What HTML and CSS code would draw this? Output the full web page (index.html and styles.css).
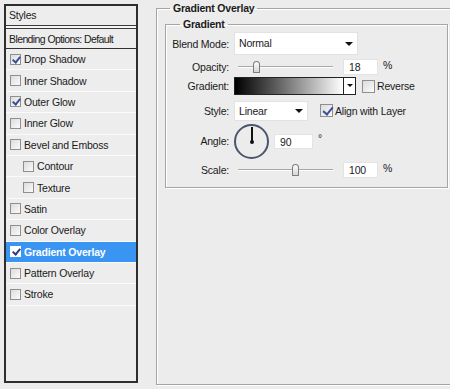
FILE: index.html
```html
<!DOCTYPE html>
<html>
<head>
<meta charset="utf-8">
<link rel="stylesheet" href="styles.css">
</head>
<body>
<div class="wrap">
  <div class="styles">
    <div class="head">Styles</div>
    <div class="blend">Blending Options: Default</div>
    <div class="list">
      <div class="item"><span class="cb on"></span>Drop Shadow</div>
      <div class="item"><span class="cb"></span>Inner Shadow</div>
      <div class="item"><span class="cb on"></span>Outer Glow</div>
      <div class="item"><span class="cb"></span>Inner Glow</div>
      <div class="item"><span class="cb"></span>Bevel and Emboss</div>
      <div class="item sub"><span class="cb"></span>Contour</div>
      <div class="item sub"><span class="cb"></span>Texture</div>
      <div class="item"><span class="cb"></span>Satin</div>
      <div class="item"><span class="cb"></span>Color Overlay</div>
      <div class="item sel"><span class="cb on"></span>Gradient Overlay</div>
      <div class="item"><span class="cb"></span>Pattern Overlay</div>
      <div class="item"><span class="cb"></span>Stroke</div>
    </div>
  </div>
  <fieldset class="outer">
    <legend>Gradient Overlay</legend>
    <fieldset class="inner">
      <legend>Gradient</legend>
      <div class="row r1">
        <div class="lbl">Blend Mode:</div>
        <div class="select wide">Normal<span class="arrow"></span></div>
      </div>
      <div class="row r2">
        <div class="lbl">Opacity:</div>
        <div class="slider"><span class="thumb t-op"></span></div>
        <div class="num">18</div>
        <div class="unit">%</div>
      </div>
      <div class="row r3">
        <div class="lbl">Gradient:</div>
        <div class="grad"><span class="swatch"></span><span class="gbtn"><span class="arrow"></span></span></div>
        <span class="cb big"></span><span class="cbl">Reverse</span>
      </div>
      <div class="row r4">
        <div class="lbl">Style:</div>
        <div class="select narrow">Linear<span class="arrow"></span></div>
        <span class="cb big on"></span><span class="cbl">Align with Layer</span>
      </div>
      <div class="row r5">
        <div class="lbl">Angle:</div>
        <div class="dial"><span class="hand"></span><span class="dot"></span></div>
        <div class="num angle">90</div>
        <div class="deg">°</div>
      </div>
      <div class="row r6">
        <div class="lbl">Scale:</div>
        <div class="slider"><span class="thumb t-sc"></span></div>
        <div class="num">100</div>
        <div class="unit">%</div>
      </div>
    </fieldset>
  </fieldset>
</div>
</body>
</html>
```
FILE: styles.css
```css
* { box-sizing: border-box; }
html, body { margin: 0; padding: 0; }
body {
  background: #ececec;
  font-family: "Liberation Sans", Arial, sans-serif;
  font-size: 10.5px;
  letter-spacing: -0.2px;
  color: #1a1a1a;
  width: 450px;
  height: 389px;
  overflow: hidden;
}
.wrap {
  display: flex;
  align-items: flex-start;
  padding: 4px 0 0 4px;
}
.styles {
  width: 134px;
  height: 379px;
  border: 2px solid #2e2e2e;
  background: #ededed;
  flex: none;
}
.head {
  height: 20px;
  line-height: 19px;
  padding-left: 3px;
  border-bottom: 1px solid #3a3a3a;
}
.blend {
  height: 23px;
  border-top: 2px solid #f6f6f6;
  box-shadow: inset 0 1px 0 #3a3a3a;
  line-height: 19px;
  padding-top: 2px;
  padding-left: 3px;
  letter-spacing: -0.6px;
  border-bottom: 1px solid #333;
}
.item {
  height: 21.4px;
  display: flex;
  align-items: center;
  padding-left: 4px;
  border-bottom: 1px solid #fafafa;
}
.item.sub { padding-left: 17px; }
.item .cb { margin-right: 3px; }
.item.sel {
  background: #3a95f2;
  color: #fff;
  font-weight: bold;
}
.cb {
  display: inline-block;
  width: 11px;
  height: 11px;
  border: 1px solid #8f8f8f;
  background: linear-gradient(135deg, #dcdcdc, #fbfbfb);
  position: relative;
  flex: none;
}
.cb.on::after {
  content: "";
  position: absolute;
  left: 3px;
  top: 0px;
  width: 3px;
  height: 6px;
  border-right: 2px solid #3b4f9a;
  border-bottom: 2px solid #3b4f9a;
  transform: rotate(40deg);
}
.sel .cb { background: #fff; border-color: #fff; }
.sel .cb.on::after { border-color: #2c3a80; }
.cb.big { width: 13px; height: 13px; }
.cb.big.on::after { left: 4px; top: 0px; width: 4px; height: 8px; }

fieldset {
  margin: 0;
  border: 1px solid #a5a5a5;
  box-shadow: 1px 1px 0 #fff, inset 1px 1px 0 #fff;
}
legend {
  font-weight: bold;
  padding: 0 3px;
  line-height: 13px;
}
.outer {
  flex: none;
  margin-left: 18px;
  margin-top: -2px;
  width: 294px;
  height: 383px;
  border-right: none;
  padding: 3px 0 0 8px;
}
.outer > legend { margin-left: 5px; }
.inner {
  width: 283px;
  height: 170px;
  padding: 1px 0 0 0;
}
.inner > legend { margin-left: 14px; }

.row {
  display: flex;
  align-items: center;
}
.lbl {
  width: 63px;
  text-align: right;
  margin-right: 5px;
  flex: none;
}
.r1 { height: 23px; }
.r2 { height: 20px; margin-top: 2px; }
.r3 { height: 18px; }
.r4 { height: 21px; margin-top: 5px; }
.r5 { height: 40px; }
.r6 { height: 18px; }

.select {
  height: 23px;
  background: #fff;
  border: 1px solid #e2e2e2;
  position: relative;
  padding-left: 4px;
  line-height: 21px;
  flex: none;
}
.select.wide { width: 124px; }
.select.narrow { width: 74px; height: 20px; line-height: 18px; }
.arrow {
  position: absolute;
  right: 4px;
  top: 50%;
  margin-top: -2px;
  border-left: 4px solid transparent;
  border-right: 4px solid transparent;
  border-top: 4px solid #111;
}
.slider {
  width: 95px;
  height: 14px;
  margin-left: 4px;
  margin-right: 10px;
  position: relative;
  flex: none;
}
.slider::before {
  content: "";
  position: absolute;
  left: 0;
  right: 0;
  top: 6px;
  border-top: 1px solid #a8a8a8;
  border-bottom: 1px solid #fff;
}
.thumb {
  position: absolute;
  top: 1px;
  width: 7px;
  height: 12px;
  border: 1px solid #7c7c7c;
  border-radius: 4px 4px 1px 1px;
  background: linear-gradient(#fdfdfd, #d6d6d6);
}
.t-op { left: 15px; }
.t-sc { left: 54px; }
.num {
  width: 35px;
  height: 16px;
  background: #fff;
  border: 1px solid #e4e4e4;
  line-height: 14px;
  padding-left: 5px;
  flex: none;
}
.unit { margin-left: 5px; margin-top: -4px; }
.grad {
  width: 122px;
  height: 18px;
  border: 1px solid #222;
  display: flex;
  flex: none;
  margin-right: 6px;
}
.swatch {
  flex: 1;
  background: linear-gradient(to right, #000 0%, #555 35%, #fff 100%);
}
.gbtn {
  width: 12px;
  background: #fff;
  border-left: 1px solid #222;
  position: relative;
}
.gbtn .arrow { right: 2px; border-left-width: 3px; border-right-width: 3px; border-top-width: 3px; }
.cbl { margin-left: 2px; }
.r4 .cb { margin-left: 12px; }
.dial {
  width: 35px;
  height: 35px;
  border: 2px solid #4a5570;
  border-radius: 50%;
  position: relative;
  margin-left: 0;
  margin-right: 5px;
  flex: none;
}
.hand {
  position: absolute;
  left: 14.5px;
  top: 1px;
  width: 2px;
  height: 15px;
  background: #111;
}
.dot {
  position: absolute;
  left: 13.5px;
  top: 14px;
  width: 4px;
  height: 4px;
  border-radius: 50%;
  background: #111;
}
.num.angle { width: 39px; height: 15px; }
.deg { margin-left: 5px; margin-top: -6px; }
```
